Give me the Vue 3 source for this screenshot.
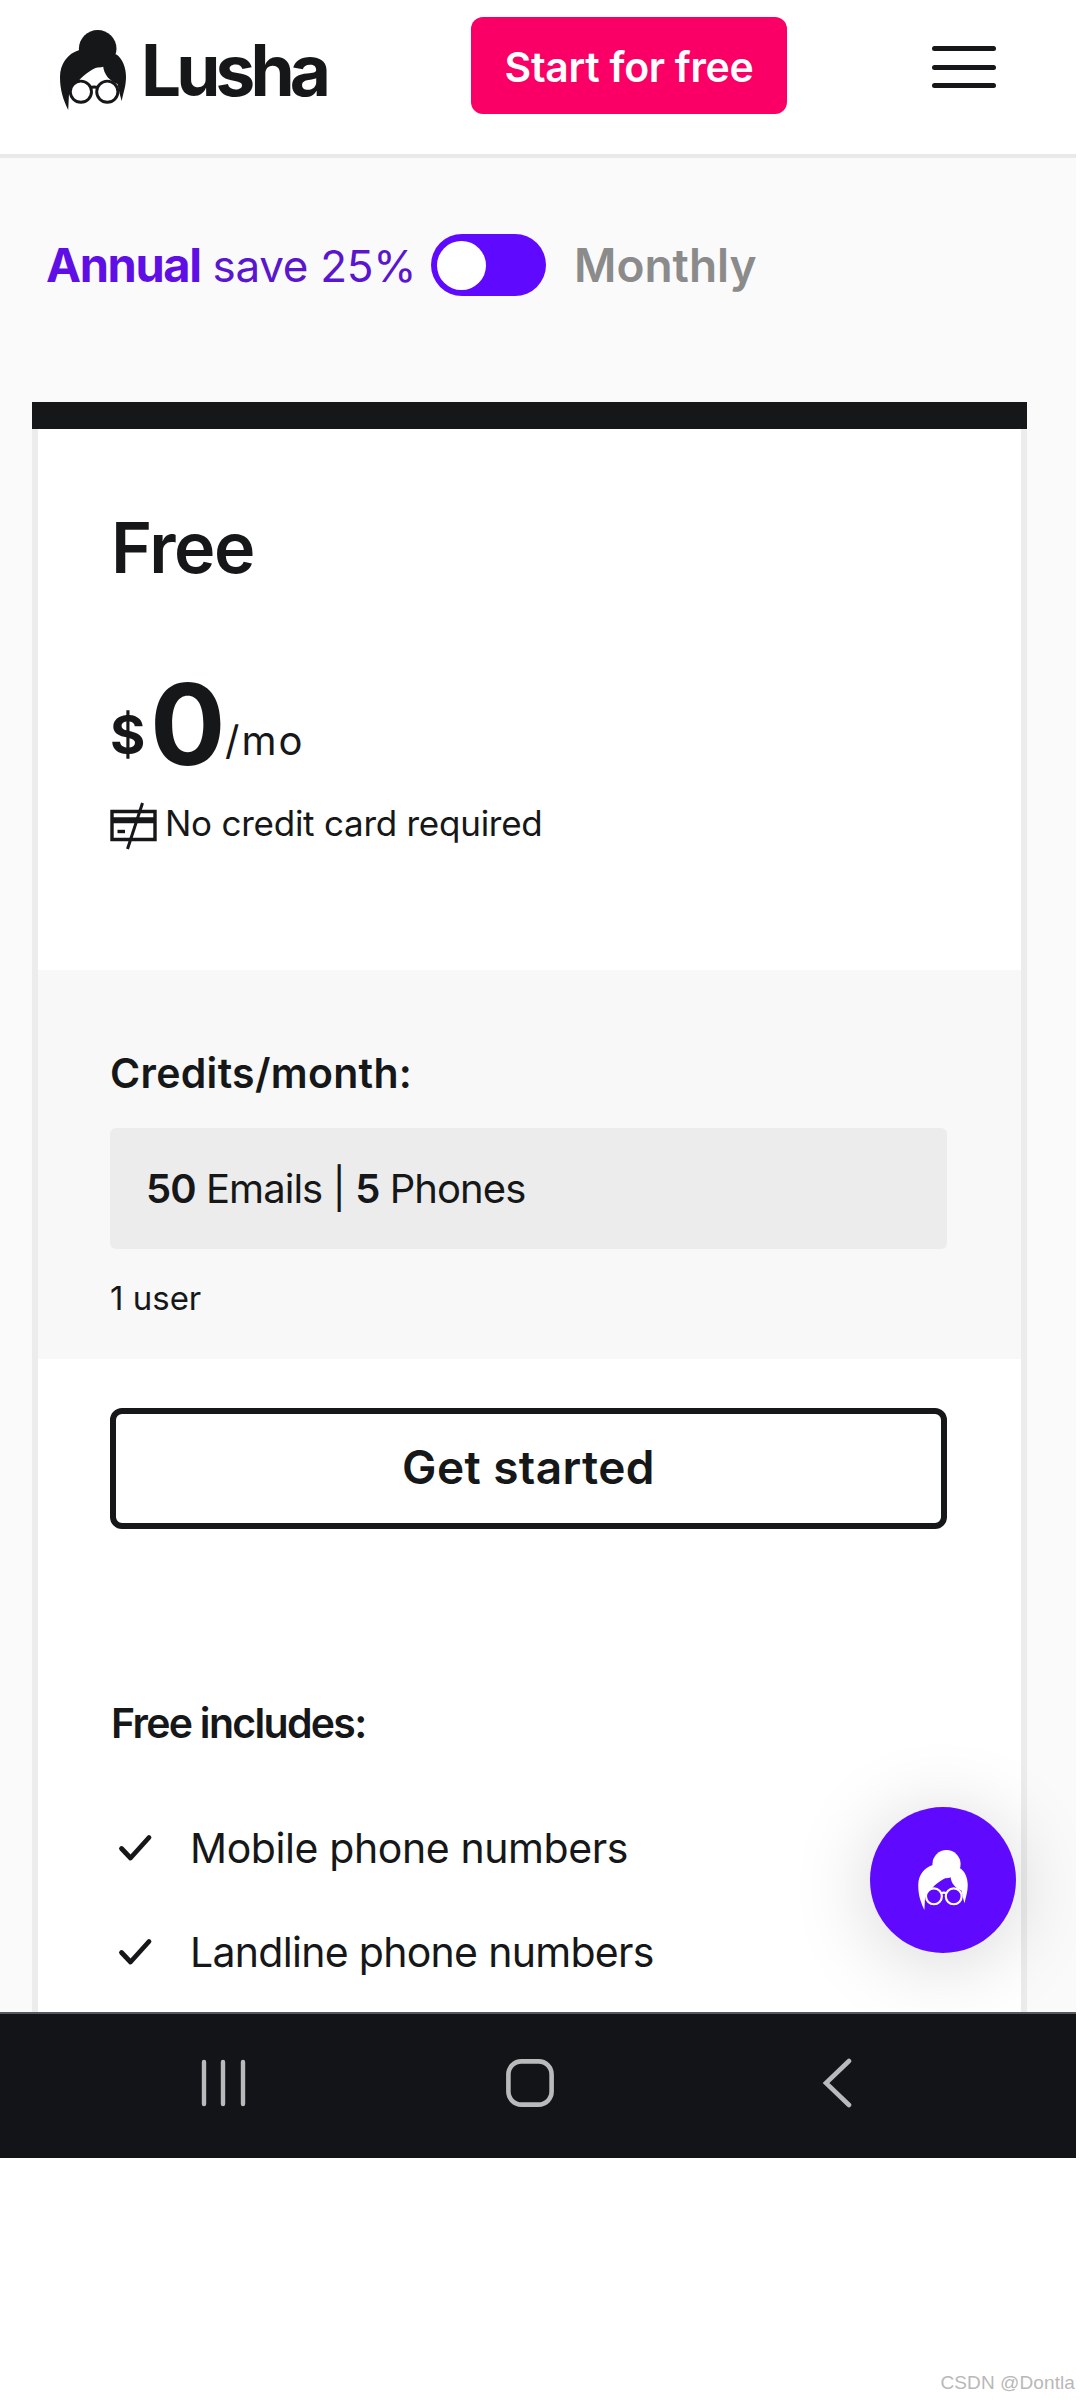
<script setup>
import { ref } from 'vue'

const annual = ref(true)
const features = [
  { label: 'Mobile phone numbers', tight: false },
  { label: 'Landline phone numbers', tight: true },
]
</script>

<template>
  <div class="page">
    <svg class="sprite" width="0" height="0" aria-hidden="true">
      <symbol id="lady" viewBox="0 0 66 80">
        <circle cx="37.700" cy="18.800" r="18.800" fill="currentColor" />
        <path
          fill="currentColor"
          d="M19.300 20L56.500 24.500C62.500 29 66 37 66 47C66 56 63.500 62 61.700 71L59.600 63.500L57.500 54C50 51 43.600 45 43 35C35 37.500 25 43 18 51.500L10.500 58L9 64L8.200 80C3 69 0 60 0 47C0 34 7.500 23.500 19.300 20Z"
        />
        <circle class="lens" cx="20.900" cy="61.700" r="10.600" stroke="currentColor" stroke-width="2.900" />
        <circle class="lens" cx="47.300" cy="61.700" r="10.600" stroke="currentColor" stroke-width="2.900" />
        <path d="M30 57.600Q34 56.200 38.300 57.600" fill="none" stroke="currentColor" stroke-width="3" />
      </symbol>
    </svg>

    <div class="screen">
      <header class="header">
        <a class="brand">
          <svg class="brand-mark"><use href="#lady" /></svg>
          <span class="brand-name">Lusha</span>
        </a>
        <button class="cta">Start for free</button>
        <button class="burger" aria-label="Menu"><i></i><i></i><i></i></button>
      </header>

      <main class="main">
        <div class="billing">
          <span class="annual"><b>Annual</b> save 25%</span>
          <button class="toggle" :class="{ monthly: !annual }" aria-label="Billing period" @click="annual = !annual">
            <i></i>
          </button>
          <span class="month">Monthly</span>
        </div>

        <section class="card">
          <div class="top">
            <h2>Free</h2>
            <div class="price">
              <span class="currency">$</span>
              <span class="amount">0</span>
              <span class="per">/mo</span>
            </div>
            <div class="nocard">
              <svg width="47" height="48" viewBox="0 0 47 48" fill="none" stroke="#161718">
                <path d="M2 9.500H45V37.500H2Z" stroke-width="3.400" />
                <path d="M2 18.300H45" stroke-width="6" />
                <path d="M7.500 29.500H15" stroke-width="3.400" />
                <path d="M32.500 1L17.500 47" stroke-width="3" />
              </svg>
              <span>No credit card required</span>
            </div>
          </div>

          <div class="credits">
            <h3>Credits/month:</h3>
            <div class="quota"><b>50</b> Emails | <b>5</b> Phones</div>
            <p>1 user</p>
          </div>

          <div class="bottom">
            <button class="start">Get started</button>
            <h3>Free includes:</h3>
            <ul>
              <li v-for="f in features" :key="f.label" :class="{ tight: f.tight }">
                <svg width="36" height="28" viewBox="0 0 36 28" fill="none" stroke="#161718" stroke-width="4.800" stroke-linecap="round" stroke-linejoin="round">
                  <path d="M4.500 14.500L13.500 24L32 3.500" />
                </svg>
                <span>{{ f.label }}</span>
              </li>
            </ul>
          </div>
        </section>
      </main>

      <button class="chat" aria-label="Chat"><svg><use href="#lady" /></svg></button>
    </div>

    <nav class="navbar">
      <svg width="46" height="48" viewBox="0 0 46 48" stroke="#b9babc" stroke-width="4.400" stroke-linecap="round">
        <path d="M3 3V45M22 3V45M42 3V45" />
      </svg>
      <svg width="48" height="48" viewBox="0 0 48 48" fill="none" stroke="#b9babc" stroke-width="4.600">
        <rect x="2.400" y="2.400" width="43.200" height="43.200" rx="13" />
      </svg>
      <svg width="30" height="50" viewBox="0 0 30 50" fill="none" stroke="#b9babc" stroke-width="4.600" stroke-linecap="round">
        <path d="M27 3L4 25L27 47" />
      </svg>
    </nav>

    <footer class="credit">CSDN @Dontla</footer>
  </div>
</template>

<style>
body {
  background: #fff;
}
</style>

<style scoped>
.page {
  width: 1080px;
  height: 2400px;
  display: flex;
  flex-direction: column;
  background: #fff;
  color: #161718;
  font-family: Inter, 'Liberation Sans', sans-serif;
  overflow: hidden;
}
.page *,
.page {
  box-sizing: border-box;
}
.sprite {
  position: absolute;
}
button {
  padding: 0;
  border: 0;
  background: none;
  font-family: inherit;
  color: inherit;
}
h2,
h3,
p,
ul {
  margin: 0;
  padding: 0;
  list-style: none;
}
.lens {
  fill: var(--face);
}
.screen {
  position: relative;
  width: 1076px;
  height: 2012px;
  overflow: hidden;
  background: #fafafa;
}
.header {
  height: 158px;
  display: flex;
  align-items: flex-start;
  padding-left: 60px;
  background: #fff;
  border-bottom: 4px solid #e8e9e8;
}
.brand {
  --face: #fff;
  width: 411px;
  height: 80px;
  margin-top: 30px;
  display: flex;
  align-items: center;
  gap: 15px;
}
.brand-mark {
  width: 66px;
  height: 80px;
}
.brand-name {
  font-size: 71px;
  line-height: 82px;
  font-weight: 700;
  letter-spacing: -4.900px;
}
.cta {
  width: 316px;
  height: 97px;
  margin-top: 17px;
  border-radius: 12px;
  background: #fa0066;
  color: #fff;
  font-size: 41px;
  line-height: 97px;
  font-weight: 600;
  letter-spacing: -0.300px;
  padding-top: 2px;
}
.burger {
  width: 64px;
  margin: 46px 0 0 145px;
  display: flex;
  flex-direction: column;
  gap: 13.500px;
}
.burger i {
  height: 5px;
  border-radius: 3px;
  background: #161718;
}
.main {
  padding: 76px 49px 0 32px;
}
.billing {
  height: 62px;
  padding-left: 14px;
  display: flex;
  align-items: center;
  line-height: 60px;
}
.annual {
  width: 385px;
  color: #5a16cf;
  font-size: 44px;
  letter-spacing: -0.300px;
  white-space: nowrap;
}
.annual b {
  color: #5f0fe6;
  font-size: 47px;
  font-weight: 700;
  letter-spacing: -1.400px;
}
.toggle {
  width: 115px;
  height: 62px;
  padding: 6px;
  border-radius: 31px;
  background: #5f0aff;
  display: flex;
  align-items: center;
}
.toggle.monthly {
  justify-content: flex-end;
}
.toggle i {
  width: 49px;
  height: 49px;
  border-radius: 50%;
  background: #fff;
}
.month {
  margin-left: 28px;
  color: #8b8b8b;
  font-size: 46px;
  font-weight: 600;
  letter-spacing: 0;
}
.card {
  margin-top: 106px;
  background: #fff;
  border: solid #ececec;
  border-width: 0 6px;
}
.card::before {
  content: '';
  display: block;
  height: 27px;
  margin: 0 -6px;
  background: #161718;
}
.top {
  height: 541px;
  padding: 79px 74px 0 72px;
}
h2 {
  padding-left: 1px;
  font-size: 70px;
  line-height: 80px;
  font-weight: 600;
  letter-spacing: -1.400px;
}
.price {
  display: flex;
  align-items: flex-start;
  height: 84px;
  margin-top: 94px;
}
.currency {
  width: 40px;
  margin-top: 25px;
  font-size: 54px;
  line-height: 56px;
  font-weight: 700;
}
.amount {
  width: 75px;
  font-size: 112px;
  line-height: 84px;
  font-weight: 700;
}
.per {
  margin-top: 39px;
  font-size: 40px;
  line-height: 40px;
  letter-spacing: 2px;
}
.nocard {
  display: flex;
  gap: 8px;
  margin-top: 36px;
}
.nocard span {
  font-size: 35px;
  line-height: 43px;
  letter-spacing: -0.250px;
}
.credits {
  height: 389px;
  padding: 78px 74px 0 72px;
  background: #f8f8f8;
}
h3 {
  font-size: 41px;
  line-height: 50px;
  font-weight: 600;
}
.credits h3 {
  letter-spacing: 0.300px;
}
.quota {
  height: 121px;
  margin-top: 30px;
  padding-left: 36px;
  border-radius: 6px;
  background: #ececec;
  font-size: 40px;
  line-height: 121px;
  letter-spacing: -0.950px;
}
.quota b {
  font-weight: 600;
}
.credits p {
  margin-top: 29px;
  font-size: 33px;
  line-height: 41px;
  letter-spacing: 0;
}
.bottom {
  height: 700px;
  padding: 49px 74px 0 72px;
}
.start {
  display: block;
  width: 837px;
  height: 121px;
  border: 6px solid #161718;
  border-radius: 12px;
  font-size: 46px;
  line-height: 107px;
  padding-bottom: 2px;
  font-weight: 600;
  letter-spacing: 0.400px;
}
.bottom h3 {
  margin-top: 169px;
  padding-left: 1px;
  letter-spacing: -1.700px;
}
.bottom ul {
  margin-top: 48px;
}
.bottom li {
  height: 104px;
  padding-left: 7px;
  display: flex;
  align-items: center;
  gap: 37px;
  font-size: 41px;
  line-height: 50px;
  letter-spacing: -0.400px;
}
.bottom li.tight {
  letter-spacing: -0.700px;
}
.chat {
  --face: #5f0aff;
  position: absolute;
  right: 60px;
  bottom: 59px;
  width: 146px;
  height: 146px;
  border-radius: 50%;
  background: #5f0aff;
  color: #fff;
  display: flex;
  align-items: center;
  justify-content: center;
  box-shadow: 0 8px 80px rgba(0, 0, 0, 0.17);
}
.chat svg {
  width: 50px;
  height: 60px;
}
.navbar {
  width: 1076px;
  height: 146px;
  flex: none;
  display: flex;
  align-items: center;
  padding: 0 0 6px 201px;
  background: #121417;
  border-top: 2px solid #55585d;
}
.navbar svg:nth-child(2) {
  margin-left: 259px;
}
.navbar svg:nth-child(3) {
  margin-left: 268px;
}
.credit {
  margin-top: auto;
  padding: 0 5px 6px 0;
  text-align: right;
  font-family: 'Liberation Sans', sans-serif;
  font-size: 19px;
  line-height: 22px;
  letter-spacing: 0.100px;
  color: #b8b8b8;
}
</style>
